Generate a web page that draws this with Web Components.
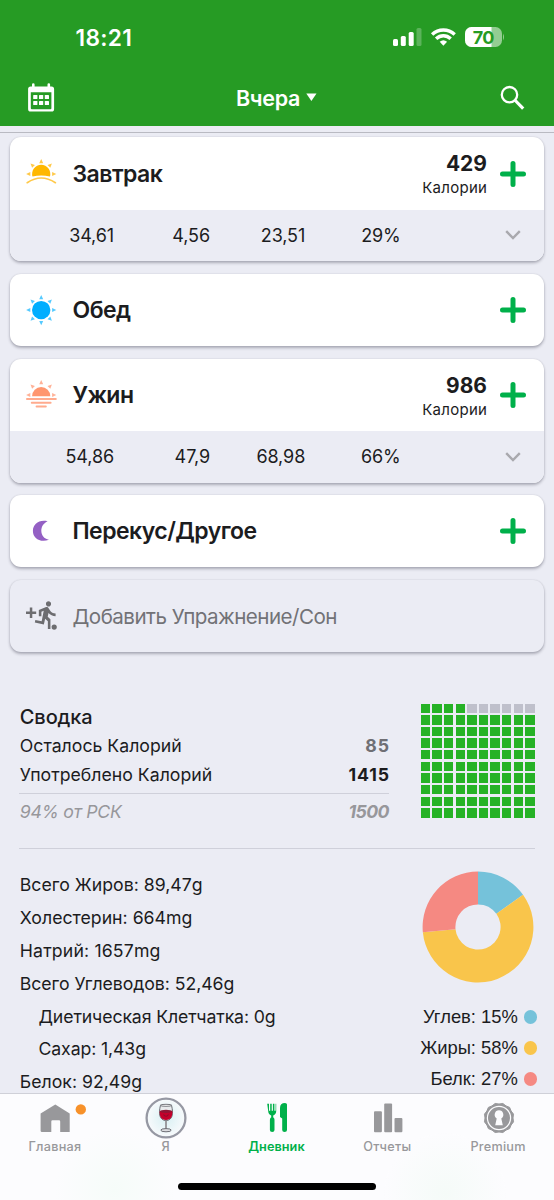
<!DOCTYPE html>
<html lang="ru">
<head>
<meta charset="utf-8">
<title>Дневник питания</title>
<style>
html,body{margin:0;padding:0;height:1200px;overflow:hidden;background:#ebecf4}
body{font-family:Inter,"Noto Sans",sans-serif;color:#1c1c1e}
</style>
</head>
<body>
<diary-app></diary-app>
<script>
const define = (name, html, init) => {
  const tpl = document.createElement('template');
  tpl.innerHTML = html;
  customElements.define(name, class extends HTMLElement {
    connectedCallback() {
      if (this.shadowRoot) return;
      this.attachShadow({mode: 'open'}).append(tpl.content.cloneNode(true));
      if (init) init(this, this.shadowRoot);
    }
  });
};

const ray = (deg, fill) => `<path d="M16.2 1 L18.2 5.2 L14.2 5.2Z" fill="${fill}" transform="rotate(${deg} 16.2 16.1)"/>`;
const rays = (list, fill) => list.map(d => ray(d, fill)).join('');
const ICONS = {
  sunrise: rays([-90, -45, 0, 45, 90], '#ffc94a') +
    '<path d="M7.5 18.6A9.1 9.1 0 1 1 24.9 18.6Q16.2 16.6 7.5 18.6Z" fill="#ffb800"/><path d="M2.2 24.7Q16.2 15.3 30.4 24.7" fill="none" stroke="#ffc94a" stroke-width="1.7" stroke-linecap="round"/>',
  sun: rays([0, 45, 90, 135, 180, 225, 270, 315], '#55caff') + '<circle cx="16.2" cy="16.1" r="9.2" fill="#00aeff"/>',
  sunset: rays([-90, -45, 0, 45, 90], '#ffb298') +
    '<path d="M7.1 17.2A9.1 9.1 0 1 1 25.3 17.2Z" fill="#ff966f"/><g fill="#ffab8e"><rect x="1" y="19.1" width="30.8" height="1.9" rx=".9"/><rect x="5.8" y="22.8" width="20.8" height="1.9" rx=".9"/><rect x="10.6" y="26.6" width="11.2" height="1.9" rx=".9"/></g>',
  moon: '<path d="M22.6 6.2C13.800 4.200 7.900 9.500 7.900 15.900C7.900 23 14.800 27.900 24 24.800C19 23.900 16.300 20.300 16.300 15.600C16.300 11.500 18.700 8 22.600 6.200Z" fill="#9460c4"/>',
  run: '<g fill="#6d6d70"><path transform="translate(6.1 -.6) scale(1.29)" d="M13.490 5.480c1.100 0 2-.9 2-2s-.9-2-2-2-2 .9-2 2 .9 2 2 2zm-3.600 13.900l1-4.400 2.100 2v6h2v-7.500l-2.100-2 .6-3c1.300 1.500 3.300 2.500 5.500 2.500v-2c-1.900 0-3.500-1-4.300-2.400l-1-1.600c-.4-.6-1-1-1.700-1-.3 0-.5.1-.8.1l-5.200 2.200v4.700h2v-3.400l1.800-.7-1.600 8.100-4.900-1-.4 2 7 1.400z"/><circle cx="29.200" cy="27.100" r="2.600"/><path d="M4.800 7.500h2.500v4h3.900v2.500H7.300v4H4.800v-4H1v-2.500h3.800z"/></g>'
};

define('status-bar', `
<style>
:host{display:flex;height:62px;padding:0 50px 0 75.500px;box-sizing:border-box;color:#fff;justify-content:space-between}
.time{font-size:22.700px;font-weight:600;line-height:76px;letter-spacing:.3px}
svg{display:block;margin-top:26px}
</style>
<span class="time">18:21</span>
<svg width="113" height="22" viewBox="0 0 113 22" fill="#fff">
<rect x="2" y="13" width="5" height="7" rx="1.500"/><rect x="9.800" y="10" width="5" height="10" rx="1.500"/><rect x="17.700" y="6" width="5" height="14" rx="1.500"/><rect x="25.500" y="2" width="5" height="18" rx="1.500" opacity=".25"/>
<g fill="none" stroke="#fff" stroke-width="3.400"><path d="M41.100 8.600C47.600 2.500 57.200 2.500 63.700 8.600"/><path d="M45.100 12.800C49.400 8.800 55.400 8.800 59.700 12.800"/></g>
<path d="M48.700 15.700Q52.400 12.600 56.100 15.700L52.400 19.800Z"/>
<defs><clipPath id="b"><rect x="74" y="1" width="37" height="20" rx="6.500"/></clipPath></defs>
<g clip-path="url(#b)"><rect x="74" y="1" width="37" height="20" opacity=".5"/><rect x="74" y="1" width="26.500" height="20"/></g>
<path d="M112 7.500q2 3.500 0 7z" opacity=".5"/>
<text x="92.300" y="17.500" text-anchor="middle" font-family="Inter" font-weight="700" font-size="18" letter-spacing="-.7" fill="#269b24">70</text>
</svg>`);

define('title-bar', `
<style>
:host{display:flex;height:64px;align-items:center;justify-content:space-between;padding:7.500px 28px 0;box-sizing:border-box;color:#fff}
.t{display:flex;align-items:center;gap:6px;margin-right:2px;font-size:21.500px;font-weight:600;letter-spacing:-.3px}
svg{display:block}
</style>
<svg width="27" height="30" viewBox="0 0 27 30"><path fill="#fff" fill-rule="evenodd" d="M4 1.500a1.300 1.300 0 0 1 2.600 0V3.500H19.500V1.500a1.300 1.300 0 0 1 2.600 0V3.500H23.500A2.600 2.600 0 0 1 26.100 6.100V26A2.600 2.600 0 0 1 23.500 28.600H2.700A2.600 2.600 0 0 1 .1 26V6.100A2.600 2.600 0 0 1 2.700 3.500H4ZM2.800 9.300V25.200a1 1 0 0 0 1 1H22.400a1 1 0 0 0 1-1V9.300Z"/><g fill="#fff"><rect x="5.200" y="12" width="4.200" height="4" rx=".6"/><rect x="11" y="12" width="4.200" height="4" rx=".6"/><rect x="16.800" y="12" width="4.200" height="4" rx=".6"/><rect x="5.200" y="18" width="4.200" height="4" rx=".6"/><rect x="11" y="18" width="4.200" height="4" rx=".6"/><rect x="16.800" y="18" width="4.200" height="4" rx=".6"/></g></svg>
<div class="t"><span>Вчера</span><svg width="11" height="9" viewBox="0 0 11 9"><path d="M.3.500H10.500L5.400 8Z" fill="#fff"/></svg></div>
<svg width="26" height="26" viewBox="0 0 26 26" fill="none" stroke="#fff"><circle cx="9.500" cy="9.700" r="7.700" stroke-width="2.300"/><path d="M14.800 15L23.200 23.600" stroke-width="3.200"/></svg>`);

define('meal-icon', `<style>:host{display:block;width:32px;height:32px;flex:none}svg{display:block}</style><svg width="32" height="32" viewBox="0 0 32 32"></svg>`,
  (el, root) => { root.querySelector('svg').innerHTML = ICONS[el.getAttribute('name')]; });

define('meal-card', `
<style>
:host{display:block;width:534px;border-radius:11px;background:#fff;box-shadow:0 2px 3px rgba(40,40,60,.32),0 0 2px rgba(40,40,60,.14);overflow:hidden}
:host([ghost]){background:#ebecf4}
.head{display:flex;align-items:center;height:72.200px;padding:0 18.500px 0 15px;box-sizing:border-box}
.name{flex:1;margin-left:15.500px;font-size:23px;font-weight:600;letter-spacing:-.54px;white-space:nowrap}
:host([ghost]) .name{font-size:20.600px;font-weight:400;letter-spacing:-.54px;color:#727276}
.cal{display:flex;flex-direction:column;align-items:flex-end;margin-right:12.500px;padding-top:5.500px}
.cal b{font-size:21px;line-height:24px;font-weight:700}
.cal span{font-size:15px;line-height:24px;letter-spacing:.3px;margin-right:-.3px}
.cal[hidden],.foot[hidden],.plus[hidden]{display:none}
.foot{display:grid;grid-template-columns:104px 96px 95.200px 95.500px 1fr;height:51.600px;align-items:center;background:#ebecf4;font-size:18px;letter-spacing:-.1px;text-align:right}
.foot svg{justify-self:end;margin-right:23px}
svg{display:block}
</style>
<div class="head"><meal-icon></meal-icon><span class="name"><slot></slot></span>
<div class="cal"><b></b><span>Калории</span></div>
<svg class="plus" width="26" height="26" viewBox="0 0 26 26" stroke="#00b04a" stroke-width="5" stroke-linecap="round"><path d="M13 2.500V23.500M2.500 13H23.500"/></svg></div>
<div class="foot"></div>`,
  (el, root) => {
    const $ = s => root.querySelector(s);
    const icon = document.createElement('meal-icon');
    icon.setAttribute('name', el.getAttribute('icon'));
    $('meal-icon').replaceWith(icon);
    const kcal = el.getAttribute('kcal');
    $('.cal').hidden = !kcal;
    $('.cal b').textContent = kcal || '';
    if (el.hasAttribute('ghost')) $('.plus').remove();
    const values = el.getAttribute('values');
    $('.foot').hidden = !values;
    if (values) $('.foot').innerHTML = values.split(' ').map(v => `<span>${v}</span>`).join('') +
      '<svg width="16" height="10" viewBox="0 0 16 10" fill="none" stroke="#a9a9ae" stroke-width="2.400"><path d="M1.200 1.200L8 8L14.800 1.200"/></svg>';
  });

define('kcal-grid', `
<style>:host{display:grid;grid-template-columns:repeat(10,9.400px);grid-auto-rows:9.400px;gap:2.230px}
i{background:#26b226}i.off{background:#bfc0cb}</style>`,
  (el, root) => {
    for (let n = 0; n < 100; n++) {
      const cell = document.createElement('i');
      if (n >= 4 && n < 10) cell.className = 'off';
      root.append(cell);
    }
  });

define('day-summary', `
<style>
:host{display:flex;justify-content:space-between;align-items:flex-start;height:196.600px;box-sizing:border-box;margin:0 19.300px;padding-top:51.300px;border-bottom:1px solid #cfd0da}
.l{width:370px;font-size:17.700px;padding-top:1.300px}
h2{margin:0;font-size:20px;font-weight:500;line-height:24px;letter-spacing:-.1px}
.r{display:flex;justify-content:space-between;line-height:28.800px;padding-left:.5px}
h2{padding-left:.5px}
.r b{font-weight:700;letter-spacing:.9px;margin-right:-.6px}
.g b{color:#6f6f74}
.t{border-top:1px solid #cfd0da;margin-top:3px;line-height:36px;font-style:italic;color:#97979b}
.t span{letter-spacing:-.3px}
.t b{letter-spacing:-.6px;margin-right:.5px}
</style>
<div class="l"><h2>Сводка</h2>
<div class="r g" style="padding-top:3.500px"><span>Осталось Калорий</span><b>85</b></div>
<div class="r"><span>Употреблено Калорий</span><b>1415</b></div>
<div class="r t"><span>94% от РСК</span><b>1500</b></div></div>
<kcal-grid></kcal-grid>`);

define('macro-chart', `
<style>
:host{display:flex;flex-direction:column;align-items:flex-end;padding-top:2px;font-family:"Liberation Sans",Arial,sans-serif;font-size:18.400px}
svg{display:block;margin-right:.7px}
ul{list-style:none;margin:18.500px 0 0;padding:0}
li{display:flex;align-items:center;justify-content:flex-end;gap:6px;height:31px;margin-right:-2.500px}
i{width:13.300px;height:13.300px;border-radius:50%}
</style>
<svg width="112" height="112" viewBox="-56 -56 112 112"></svg>
<ul><li>Углев: 15%<i style="background:#75c2da"></i></li><li>Жиры: 58%<i style="background:#f9c54b"></i></li><li>Белк: 27%<i style="background:#f58982"></i></li></ul>`,
  (el, root) => {
    const R = 55.400, r = 22.600;
    const at = (p, rad) => [Math.sin(p * 2 * Math.PI) * rad, -Math.cos(p * 2 * Math.PI) * rad].map(v => v.toFixed(2)).join(' ');
    root.querySelector('svg').innerHTML = [[0, .151, '#75c2da'], [.151, .735, '#f9c54b'], [.735, 1, '#f58982']].map(([a, b, c]) => {
      const big = b - a > .5 ? 1 : 0;
      return `<path fill="${c}" d="M${at(a, R)}A${R} ${R} 0 ${big} 1 ${at(b, R)}L${at(b, r)}A${r} ${r} 0 ${big} 0 ${at(a, r)}Z"/>`;
    }).join('');
  });

define('nutrient-list', `
<style>:host{display:flex;flex-direction:column;font-size:17.700px;line-height:32.850px}
::slotted(.sub){padding-left:18.700px;letter-spacing:-.12px}</style><slot></slot>`);

define('tab-item', `
<style>
:host{display:flex;flex-direction:column;align-items:center;flex:1 1 0;color:#98989b;font-size:12.700px;font-weight:500;letter-spacing:.25px}
:host([active]){color:#00b04a;font-weight:600;letter-spacing:.05px}
.i{height:45.500px;width:56px;display:block}
::slotted(svg){display:block;overflow:visible}
.l{line-height:16px;margin-right:1px}
</style>
<div class="i"><slot name="icon"></slot></div><span class="l"><slot></slot></span>`);

define('tab-bar', `
<style>
:host{display:flex;flex-direction:column;height:107.500px;box-sizing:border-box;border-top:1px solid #cfd0d8;background:radial-gradient(circle at 445px 100px,#f5fbf8 0,#fcfcfe 60px,transparent 61px),radial-gradient(circle at 115px 95px,#f6fcf9 0,#fcfcfe 60px),#fcfcfe}
nav{display:flex;flex:1}
.home{width:198.500px;height:7px;border-radius:4px;background:#000;margin:0 auto 10px}
</style>
<nav>
<tab-item><svg slot="icon" width="56" height="46" viewBox="0 0 56 46" fill="#98989b"><path d="M13.600 19.500L28.300 10.500L42.700 19.500V38H33.200V27.500Q33.200 26.300 32 26.300H25.500Q24.300 26.300 24.300 27.500V38H15Q13.600 38 13.600 36.700Z"/><circle cx="53.800" cy="15.400" r="5.200" fill="#f7912a"/></svg>Главная</tab-item>
<tab-item><svg slot="icon" width="56" height="46" viewBox="0 0 56 46"><defs><radialGradient id="g"><stop offset="0" stop-color="#d8f0f3"/><stop offset="1" stop-color="#f8fafc"/></radialGradient></defs><circle cx="28" cy="24" r="19.400" fill="url(#g)" stroke="#9698a3" stroke-width="2.300"/><path d="M22.500 11.200C20.300 20 21.500 26.200 28 26.600C34.500 26.200 35.700 20 33.500 11.200Z" fill="#e8eaec" stroke="#6c6d74" stroke-width="1"/><path d="M21.700 17H34.300C34.600 22.500 33 25.800 28 26C23 25.800 21.400 22.500 21.700 17Z" fill="#c4002b"/><ellipse cx="28" cy="17.300" rx="6.200" ry="1.600" fill="#8f1635"/><ellipse cx="28" cy="11.300" rx="5.500" ry="1" fill="#fff" stroke="#6c6d74" stroke-width=".9"/><path d="M25.500 20.500q2.500 3.500 5 0" fill="none" stroke="#8a0f2c" stroke-width="1.200"/><path d="M28 26.500V35" stroke="#77777c" stroke-width="2"/><path d="M28 26.500V34" stroke="#e2e2e5" stroke-width=".7"/><ellipse cx="28" cy="36.200" rx="5.200" ry="1.600" fill="#dcdde0" stroke="#6c6d74" stroke-width="1"/></svg>Я</tab-item>
<tab-item active><svg slot="icon" width="56" height="46" viewBox="0 0 56 46" fill="#00b04a"><path d="M18.200 9.800h1.800v7h1.200v-7h1.500v7h1.200v-7h1.500v7h1.200v-7h.6V17q0 3.500-3 4.400V23.500h.3q1 .8 1 2.200V36q0 2-2.300 2t-2.300-2V25.700q0-1.400 1-2.200h.3V21.400q-3-.9-3-4.400Z" /><path d="M38 10.200V36q0 2-2.400 2T33.200 36V24.500L31 23V14q0-5 5-5Q38 9 38 10.500Z"/></svg>Дневник</tab-item>
<tab-item><svg slot="icon" width="56" height="46" viewBox="0 0 56 46" fill="#98989b"><rect x="14" y="17.300" width="7.900" height="21" rx="1"/><rect x="24.200" y="9.600" width="7.900" height="28.700" rx="1"/><rect x="34.500" y="24" width="7.900" height="14.300" rx="1"/></svg>Отчеты</tab-item>
<tab-item><svg id="premium" slot="icon" width="56" height="46" viewBox="0 0 56 46"><path fill="#98989b" stroke="#98989b" stroke-linejoin="round"/><circle cx="28" cy="24" r="11.600" fill="none" stroke="#fcfcfe" stroke-width="1.200"/><path fill="#fcfcfe" d="M28 16.300a4.400 4.400 0 0 1 2.300 8.100L31.800 31.300H24.200L25.700 24.400A4.400 4.400 0 0 1 28 16.300Z"/></svg>Premium</tab-item>
</nav>
<div class="home"></div>`, (el, root) => {
  const pts = [];
  for (let k = 0; k < 24; k++) {
    const a = k * Math.PI / 12 + Math.PI / 12, rad = k % 2 ? 14 : 15;
    pts.push((28 + Math.sin(a) * rad).toFixed(2) + ' ' + (24 - Math.cos(a) * rad).toFixed(2));
  }
  root.querySelector('#premium path').setAttribute('d', 'M' + pts.join('L') + 'Z');
});

define('diary-app', `
<style>
:host{display:flex;flex-direction:column;width:554px;height:1200px;overflow:hidden;background:#ebecf4}
header{background:#269b24;flex:none}
.strip{height:7.400px;box-sizing:border-box;border-bottom:1px solid #b9bac2;flex:none}
main{flex:1;min-height:0;overflow:hidden;padding-top:4.100px}
.cards{display:flex;flex-direction:column;gap:12.700px;padding:0 10px}
.nut{display:flex;justify-content:space-between;align-items:flex-start;margin:0 19.300px;padding-top:20.200px}
nutrient-list{padding-left:.5px}
tab-bar{flex:none}
</style>
<header><status-bar></status-bar><title-bar></title-bar></header>
<div class="strip"></div>
<main>
<div class="cards">
<meal-card icon="sunrise" kcal="429" values="34,61 4,56 23,51 29%">Завтрак</meal-card>
<meal-card icon="sun">Обед</meal-card>
<meal-card icon="sunset" kcal="986" values="54,86 47,9 68,98 66%">Ужин</meal-card>
<meal-card icon="moon">Перекус/Другое</meal-card>
<meal-card icon="run" ghost>Добавить Упражнение/Сон</meal-card>
</div>
<day-summary></day-summary>
<div class="nut">
<nutrient-list>
<span>Всего Жиров: 89,47g</span><span>Холестерин: 664mg</span><span style="letter-spacing:.15px">Натрий: 1657mg</span><span style="letter-spacing:-.06px">Всего Углеводов: 52,46g</span><span class="sub">Диетическая Клетчатка: 0g</span><span class="sub">Сахар: 1,43g</span><span>Белок: 92,49g</span>
</nutrient-list>
<macro-chart></macro-chart>
</div>
</main>
<tab-bar></tab-bar>`);
</script>
</body>
</html>
